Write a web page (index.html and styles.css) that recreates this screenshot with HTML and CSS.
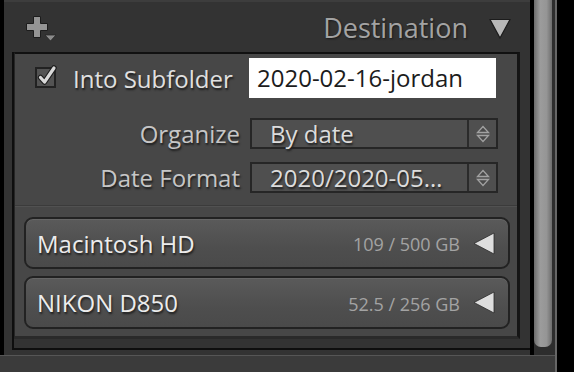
FILE: index.html
```html
<!DOCTYPE html>
<html>

<head>
	<meta charset="utf-8" />
	<title>Destination</title>
	<link rel="stylesheet" href="styles.css">
</head>

<body>
	<div class="app">
		<div class="left">
			<div class="top">
				<div class="gutter"></div>
				<div class="main">
					<div class="prev"></div>
					<div class="header">
						<svg class="add" width="34" height="30" viewBox="0 0 34 30">
							<path d="M8.5 2.5H15.5V9.5H22.5V16.5H15.5V23.5H8.5V16.5H1.5V9.5H8.5Z" fill="#959595" stroke="#1c1c1c" />
							<path d="M20 21H31L25.5 27Z" fill="#8c8c8c" stroke="#262626" stroke-width="0.8" />
						</svg>
						<span class="title">Destination</span>
						<svg class="collapse" width="22" height="22" viewBox="0 0 22 22">
							<path d="M1 2.5H21L11 21Z" fill="#b8b8b8" stroke="#1c1c1c" stroke-width="1.2" />
						</svg>
					</div>
					<div class="body">
						<div class="box">
							<div class="row first">
								<div class="label sub">
									<svg class="check" width="24" height="26" viewBox="0 0 24 26">
										<rect x="1" y="5" width="19" height="19" fill="#535353" stroke="#222" stroke-width="2" />
										<path d="M5.5 14.5L9.5 19L19 5" fill="none" stroke="#1e1e1e" stroke-width="5.5" stroke-linecap="round" stroke-linejoin="round" />
										<path d="M5.5 14.5L9.5 19L19 5" fill="none" stroke="#d9d9d9" stroke-width="3.2" stroke-linecap="round" stroke-linejoin="round" />
									</svg>
									<span>Into Subfolder</span>
								</div>
								<div class="input">2020-02-16-jordan</div>
							</div>
							<div class="row second">
								<div class="label">Organize</div>
								<div class="select">
									<span class="value">By date</span>
									<span class="stepper">
										<svg width="14" height="20" viewBox="0 0 14 20">
											<path d="M7 2.5L12.5 8.5H1.5Z" fill="#4a4a4a" stroke="#a2a2a2" stroke-width="1.3" />
											<path d="M1.5 11.5H12.5L7 17.5Z" fill="#4a4a4a" stroke="#a2a2a2" stroke-width="1.3" />
										</svg>
									</span>
								</div>
							</div>
							<div class="row third">
								<div class="label">Date Format</div>
								<div class="select">
									<span class="value">2020/2020-05…</span>
									<span class="stepper">
										<svg width="14" height="20" viewBox="0 0 14 20">
											<path d="M7 2.5L12.5 8.5H1.5Z" fill="#4a4a4a" stroke="#a2a2a2" stroke-width="1.3" />
											<path d="M1.5 11.5H12.5L7 17.5Z" fill="#4a4a4a" stroke="#a2a2a2" stroke-width="1.3" />
										</svg>
									</span>
								</div>
							</div>
							<div class="sep"></div>
							<div class="volume">
								<span class="name">Macintosh HD</span>
								<span class="size">109 / 500 GB</span>
								<svg class="tri" width="22" height="23" viewBox="0 0 22 23">
									<path d="M1 11.5L21 1V22Z" fill="#dedede" stroke="#2a2a2a" stroke-width="0.8" />
								</svg>
							</div>
							<div class="volume">
								<span class="name">NIKON D850</span>
								<span class="size">52.5 / 256 GB</span>
								<svg class="tri" width="22" height="23" viewBox="0 0 22 23">
									<path d="M1 11.5L21 1V22Z" fill="#dedede" stroke="#2a2a2a" stroke-width="0.8" />
								</svg>
							</div>
						</div>
					</div>
				</div>
				<div class="scroll">
					<div class="thumb"></div>
				</div>
			</div>
			<div class="footer"></div>
		</div>
		<div class="edge"></div>
	</div>
</body>

</html>
```

FILE: styles.css
```css
* {
	margin: 0px;
	padding: 0px;
	box-sizing: border-box;
}

body {
	background-color: #000;
	font-family: "Open Sans", "Liberation Sans", sans-serif;
	width: 574px;
	height: 372px;
	overflow: hidden;
}

.app {
	display: flex;
	height: 372px;
}

.left {
	width: 555px;
	display: flex;
	flex-direction: column;
}

.top {
	display: flex;
	height: 355px;
}

.gutter {
	width: 4px;
	background-color: #000;
}

.main {
	width: 526px;
	background-color: #333;
	display: flex;
	flex-direction: column;
}

.prev {
	height: 2px;
	background-color: #3d3d3d;
}

/*标题栏*/
.header {
	height: 50px;
	display: flex;
	align-items: center;
	padding-left: 21px;
	padding-right: 19px;
}

.header .add {
	margin-top: 4px;
}

.header .title {
	margin-left: auto;
	font-size: 27px;
	color: #a3a3a3;
	text-shadow: 1px 1px 2px #1a1a1a;
}

.header .collapse {
	margin-left: 21px;
	margin-top: 1px;
}

.body {
	margin-left: 8px;
	border-left: 2px solid #0e0e0e;
	border-bottom: 2px solid #0e0e0e;
	padding-bottom: 9px;
}

.box {
	margin-right: 10px;
	background-color: #474747;
	border-top: 2px solid #111;
	border-right: 3px solid #151515;
	border-left: 1px solid #262626;
	border-bottom: 3px solid #2a2a2a;
	padding-bottom: 7px;
}

.row {
	display: flex;
	align-items: center;
}

.row.first {
	margin-top: 4px;
	height: 40px;
}

.row.second {
	margin-top: 20px;
	height: 31px;
}

.row.third {
	margin-top: 13px;
	height: 31px;
}

.label {
	width: 225px;
	display: flex;
	align-items: center;
	justify-content: flex-end;
	font-size: 24px;
	color: #c6c6c6;
	text-shadow: 1px 2px 2px #1c1c1c;
}

.label.sub {
	justify-content: flex-start;
	padding-left: 20px;
	color: #e0e0e0;
}

.label.sub .check {
	margin-top: -4px;
	margin-right: 14px;
}

.input {
	margin-left: 9px;
	width: 247px;
	height: 40px;
	background-color: #fff;
	color: #1c1c1c;
	font-size: 24px;
	line-height: 40px;
	padding-left: 8px;
	white-space: nowrap;
}

.select {
	margin-left: 10px;
	width: 248px;
	height: 31px;
	display: flex;
	align-items: center;
	background-color: #4f4f4f;
	border: 2px solid #262626;
}

.select .value {
	flex: 1;
	padding-left: 18px;
	font-size: 24px;
	line-height: 27px;
	color: #dcdcdc;
	text-shadow: 1px 2px 2px #1e1e1e;
	white-space: nowrap;
}

.select .stepper {
	width: 29px;
	height: 100%;
	border-left: 2px solid #2b2b2b;
	display: flex;
	align-items: center;
	justify-content: center;
}

.sep {
	margin-top: 12px;
	height: 2px;
	border-top: 1px solid #3b3b3b;
	border-bottom: 1px solid #515151;
}

/*卷列表*/
.volume {
	margin-top: 10px;
	margin-left: 9px;
	width: 486px;
	height: 52px;
	display: flex;
	align-items: center;
	padding-left: 11px;
	padding-right: 13px;
	border: 2px solid #222;
	border-radius: 9px;
	background-image: linear-gradient(to bottom, #5a5a5a, #4e4e4e 60%, #4a4a4a);
	box-shadow: inset 0 1px 0 #666;
}

.volume + .volume {
	margin-top: 7px;
	height: 53px;
}

.volume .name {
	font-size: 24px;
	color: #ececec;
	text-shadow: 1px 2px 2px #1e1e1e;
}

.volume .size {
	margin-left: auto;
	margin-top: 2px;
	font-size: 18px;
	color: #a3a3a3;
}

.volume .tri {
	margin-left: 13px;
}

/*滚动条*/
.scroll {
	width: 25px;
	border-left: 4px solid #000;
	background-color: #2d2d2d;
}

.thumb {
	width: 18px;
	height: 347px;
	border-radius: 0 0 7px 7px;
	background-image: linear-gradient(to right, #6c6c6c, #9c9c9c 35%, #959595 70%, #6e6e6e);
}

.footer {
	height: 17px;
	border-top: 1px solid #565656;
	background-color: #3b3b3b;
}

.edge {
	width: 2px;
	background-color: #666;
}
```
